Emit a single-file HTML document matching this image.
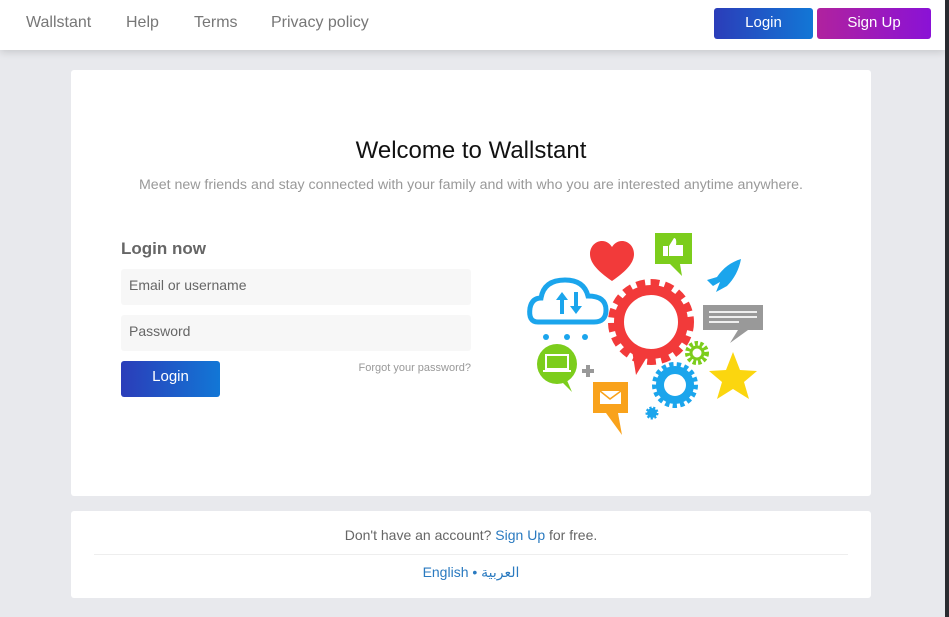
<!DOCTYPE html>
<html><head><meta charset="utf-8"><style>
*{box-sizing:border-box;margin:0;padding:0}
body{width:949px;height:617px;overflow:hidden;background:#e8e9ed;font-family:"Liberation Sans",sans-serif;position:relative}
.sb{position:absolute;right:0;top:0;width:4px;height:617px;background:#2a2b30}
.hdr{position:absolute;left:0;top:0;width:945px;height:50px;background:#fff;box-shadow:0 2px 8px rgba(0,0,0,.15)}
.nav a{position:absolute;top:14px;font-size:16px;color:#777;text-decoration:none}
.btn{position:absolute;color:#fff;font-size:15px;text-align:center;border-radius:3px}
.card{position:absolute;background:#fff;border-radius:3px}
.inp{position:absolute;left:121px;width:350px;height:36px;background:#f7f7f7;border-radius:3px;font-size:14px;color:#666;padding:8px 8px}
</style></head><body>
<div class="hdr">
<div class="nav"><a style="left:26px">Wallstant</a><a style="left:126px">Help</a><a style="left:194px">Terms</a><a style="left:271px">Privacy policy</a></div>
<div class="btn" style="left:714px;top:8px;width:99px;height:31px;line-height:29px;background:linear-gradient(90deg,#2b3db9,#1277d6)">Login</div>
<div class="btn" style="left:817px;top:8px;width:114px;height:31px;line-height:29px;background:linear-gradient(90deg,#b0229e,#8a12d6)">Sign Up</div>
</div>
<div class="sb"></div>
<div class="card" style="left:71px;top:70px;width:800px;height:426px"></div>
<div style="position:absolute;left:71px;top:137px;width:800px;text-align:center;font-size:24px;color:#111">Welcome to Wallstant</div>
<div style="position:absolute;left:71px;top:177px;width:800px;text-align:center;font-size:14.2px;color:#999">Meet new friends and stay connected with your family and with who you are interested anytime anywhere.</div>
<div style="position:absolute;left:121px;top:239px;font-size:17px;font-weight:bold;color:#666">Login now</div>
<div class="inp" style="top:269px">Email or username</div>
<div class="inp" style="top:315px">Password</div>
<div class="btn" style="left:121px;top:361px;width:99px;height:36px;line-height:32px;background:linear-gradient(90deg,#2b3db9,#1277d6)">Login</div>
<div style="position:absolute;left:300px;width:171px;text-align:right;top:362px;font-size:11px;color:#999">Forgot your password?</div>
<svg style="position:absolute;left:520px;top:225px" width="250" height="215" viewBox="520 225 250 215">
<path d="M612 281 C596 270 590 262 590 254 C590 246 596 241 602 241 C607 241 610 244 612 247 C614 244 617 241 622 241 C628 241 634 246 634 254 C634 262 628 270 612 281Z" fill="#f23a3a"/>
<rect x="655" y="233" width="37" height="31" fill="#7ccd1c"/><path d="M670 264 L682 276 L680 264Z" fill="#7ccd1c"/>
<path d="M663 246 H668 V256 H663Z M669 256 V246 L674 238 Q677 238 676 245 H683 V256Z" fill="#fff"/>
<path d="M741 259 C731 262 723 268 717 277 L707 280 L713 286 L720 282 L716 292 L727 286 C734 279 739 270 741 259Z" fill="#1ba5ec"/>
<path d="M538 322 Q528 322 530 308 Q532 298 541 298 Q544 280 565 280 Q584 280 588 296 Q606 296 606 310 Q606 322 594 322Z" fill="none" stroke="#1ba5ec" stroke-width="5"/>
<path d="M562 292 L556 300 H560 V314 H564 V300 H568Z M576 314 L582 306 H578 V292 H574 V306 H570Z" fill="#1ba5ec"/>
<circle cx="546" cy="337" r="3" fill="#1ba5ec"/><circle cx="567" cy="337" r="3" fill="#1ba5ec"/><circle cx="585" cy="337" r="3" fill="#1ba5ec"/>
<circle cx="651" cy="322" r="36" fill="none" stroke="#f23a3a" stroke-width="14" stroke-dasharray="8 5"/>
<circle cx="651" cy="322" r="32" fill="none" stroke="#f23a3a" stroke-width="10"/>
<path d="M632 350 L636 375 L650 352Z" fill="#f23a3a"/>
<rect x="703" y="305" width="60" height="25" fill="#999"/><path d="M738 330 L730 343 L748 330Z" fill="#999"/>
<rect x="709" y="311" width="48" height="2" fill="#eee"/><rect x="709" y="316" width="48" height="2" fill="#eee"/><rect x="709" y="321" width="30" height="2" fill="#eee"/>
<circle cx="697" cy="353" r="9" fill="none" stroke="#7ccd1c" stroke-width="6" stroke-dasharray="3 2"/><circle cx="697" cy="353" r="6" fill="none" stroke="#7ccd1c" stroke-width="3"/>
<circle cx="557" cy="364" r="20" fill="#7ccd1c"/><path d="M560 380 L572 392 L566 378Z" fill="#7ccd1c"/>
<rect x="546" y="355" width="22" height="14" fill="none" stroke="#fff" stroke-width="2"/><rect x="543" y="370" width="28" height="2" fill="#fff"/>
<path d="M582 369 H594 V373 H582Z M586 365 H590 V377 H586Z" fill="#999"/>
<path d="M733 352 L740 370 L757 371 L744 382 L749 399 L733 389 L717 399 L722 382 L709 371 L726 370Z" fill="#fbd60f"/>
<circle cx="675" cy="385" r="19" fill="none" stroke="#1ba5ec" stroke-width="8" stroke-dasharray="4 3"/><circle cx="675" cy="385" r="15" fill="none" stroke="#1ba5ec" stroke-width="8"/>
<rect x="593" y="382" width="35" height="31" fill="#f9a21b"/><path d="M606 413 L622 435 L618 413Z" fill="#f9a21b"/>
<rect x="600" y="391" width="21" height="13" fill="#fff"/><path d="M600 391 L610 399 L621 391" fill="none" stroke="#f9a21b" stroke-width="1.5"/>
<circle cx="652" cy="413" r="5" fill="#1ba5ec" stroke="#1ba5ec" stroke-width="3" stroke-dasharray="2 1.5"/>
</svg>
<div class="card" style="left:71px;top:511px;width:800px;height:87px"></div>
<div style="position:absolute;left:71px;top:527px;width:800px;text-align:center;font-size:14px;color:#666">Don't have an account? <span style="color:#2a7ac0">Sign Up</span> for free.</div>
<div style="position:absolute;left:94px;top:554px;width:754px;height:1px;background:#eee"></div>
<div style="position:absolute;left:71px;top:564px;width:800px;text-align:center;font-size:14px;color:#2a7ac0;font-family:'Liberation Sans','DejaVu Sans',sans-serif">English • العربية</div>
</body></html>
